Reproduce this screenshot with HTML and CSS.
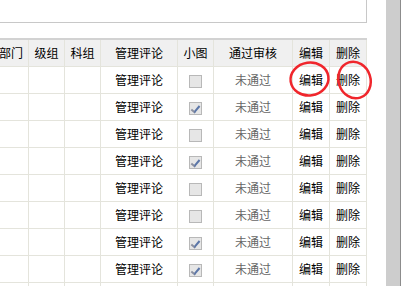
FILE: index.html
```html
<!DOCTYPE html>
<html lang="zh-CN">
<head>
    <meta charset="UTF-8">
    <title>评论管理</title>
    <link rel="stylesheet" href="styles.css">
</head>
<body>
<div class="main">
    <div class="page">
        <div class="search"></div>
        <table class="list">
            <thead>
            <tr>
                <th class="c-dept">部门</th>
                <th class="c-grade">级组</th>
                <th class="c-subj">科组</th>
                <th class="c-comment">管理评论</th>
                <th class="c-pic">小图</th>
                <th class="c-pass">通过审核</th>
                <th class="c-edit">编辑</th>
                <th class="c-del">删除</th>
            </tr>
            </thead>
            <tbody>
            <tr><td></td><td></td><td></td><td>管理评论</td><td><span class="chk"></span></td><td class="gray">未通过</td><td>编辑</td><td>删除</td></tr>
            <tr><td></td><td></td><td></td><td>管理评论</td><td><span class="chk on"></span></td><td class="gray">未通过</td><td>编辑</td><td>删除</td></tr>
            <tr><td></td><td></td><td></td><td>管理评论</td><td><span class="chk"></span></td><td class="gray">未通过</td><td>编辑</td><td>删除</td></tr>
            <tr><td></td><td></td><td></td><td>管理评论</td><td><span class="chk on"></span></td><td class="gray">未通过</td><td>编辑</td><td>删除</td></tr>
            <tr><td></td><td></td><td></td><td>管理评论</td><td><span class="chk"></span></td><td class="gray">未通过</td><td>编辑</td><td>删除</td></tr>
            <tr><td></td><td></td><td></td><td>管理评论</td><td><span class="chk"></span></td><td class="gray">未通过</td><td>编辑</td><td>删除</td></tr>
            <tr><td></td><td></td><td></td><td>管理评论</td><td><span class="chk on"></span></td><td class="gray">未通过</td><td>编辑</td><td>删除</td></tr>
            <tr><td></td><td></td><td></td><td>管理评论</td><td><span class="chk on"></span></td><td class="gray">未通过</td><td>编辑</td><td>删除</td></tr>
            <!--下一行只露出边框-->
            <tr><td></td><td></td><td></td><td></td><td></td><td></td><td></td><td></td></tr>
            </tbody>
        </table>
    </div>
</div>
<div class="bar"></div>
<!--红圈标注-->
<svg class="marks" width="403" height="286" viewBox="0 0 403 286">
    <ellipse cx="309.5" cy="79" rx="19" ry="16.5" transform="rotate(-8 309.5 79)"/>
    <ellipse cx="354.5" cy="80" rx="16" ry="18.5" transform="rotate(-18 354.5 80)"/>
</svg>
</body>
</html>
```

FILE: styles.css
```css
* {
    margin: 0;
    padding: 0;
    box-sizing: border-box;
}

html, body {
    height: 100%;
}

body {
    display: flex;
    position: relative;
    background: #fff;
    font-family: "Noto Sans CJK SC", "Microsoft YaHei", sans-serif;
    font-size: 12px;
    color: #000;
    overflow: hidden;
}

.main {
    width: 386px;
    height: 100%;
    overflow: hidden;
}

.page {
    width: 373px;
    margin-left: -6px;
}

.search {
    height: 42px;
    margin-top: -19px;
    border: 1px solid #c8c8c8;
}

.list {
    width: 373px;
    margin-top: 15px;
    table-layout: fixed;
    border-collapse: separate;
    border-spacing: 0;
    border-top: 2px solid #d2d2d2;
}

.list th,
.list td {
    height: 27px;
    border-right: 1px solid #e4e4dc;
    border-bottom: 1px solid #e4e4dc;
    text-align: center;
    vertical-align: middle;
    line-height: 16px;
    font-weight: normal;
    color: #000;
    white-space: nowrap;
    overflow: hidden;
}

.list th {
    background: #f0f0f0;
}

.c-dept { width: 35px; }
.c-grade { width: 36px; }
.c-subj { width: 36px; }
.c-comment { width: 77px; }
.c-pic { width: 36px; }
.c-pass { width: 79px; }
.c-edit { width: 37px; }
.c-del { width: 37px; }

.list td.gray {
    color: #666;
}

.chk {
    display: inline-block;
    width: 13px;
    height: 13px;
    margin-top: 1px;
    vertical-align: middle;
    border: 1px solid #b8b8b8;
    background: #e6e6e6;
    position: relative;
}

.chk.on::after {
    content: "";
    position: absolute;
    left: 3px;
    top: 1px;
    width: 3px;
    height: 7px;
    border-right: 2px solid #5b76a8;
    border-bottom: 2px solid #8a8fa0;
    transform: rotate(40deg);
}

.bar {
    width: 15px;
    height: 100%;
    margin-right: 1px;
    background: #cdcdcd;
    border-right: 1px solid #8c8c8c;
    flex-shrink: 0;
}

.marks {
    position: absolute;
    left: 0;
    top: 0;
    pointer-events: none;
}

.marks ellipse {
    fill: none;
    stroke: #f0262c;
    stroke-width: 2.5;
}
```
